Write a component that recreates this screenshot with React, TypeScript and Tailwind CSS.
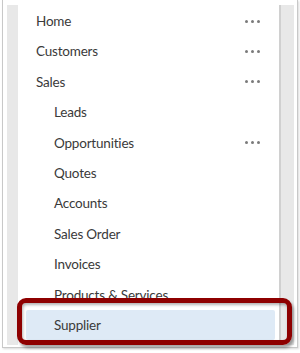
import React from "react";

type Item = {
  label: string;
  level: 0 | 1;
  more?: boolean;
  active?: boolean;
};

const items: Item[] = [
  { label: "Home", level: 0, more: true },
  { label: "Customers", level: 0, more: true },
  { label: "Sales", level: 0, more: true },
  { label: "Leads", level: 1 },
  { label: "Opportunities", level: 1, more: true },
  { label: "Quotes", level: 1 },
  { label: "Accounts", level: 1 },
  { label: "Sales Order", level: 1 },
  { label: "Invoices", level: 1 },
  { label: "Products & Services", level: 1 },
  { label: "Supplier", level: 1, active: true },
];

function Dots() {
  return (
    <span className="flex items-center gap-[3px]">
      <span className="h-[3px] w-[3px] rounded-full bg-[#7a7a7a]" />
      <span className="h-[3px] w-[3px] rounded-full bg-[#7a7a7a]" />
      <span className="h-[3px] w-[3px] rounded-full bg-[#7a7a7a]" />
    </span>
  );
}

export default function App() {
  return (
    <div
      className="relative h-[353px] w-[300px] overflow-hidden bg-white"
      style={{ fontFamily: 'Lato, "Open Sans", sans-serif' }}
    >
      <div className="ml-[2px] h-[348px] w-[296px] border-b border-l border-r border-[#c8c8c8] bg-white shadow-[1px_1px_2px_rgba(0,0,0,0.15)]">
        <div className="flex h-full pl-[4px] pr-[3px] pt-[5px] pb-[2px]">
          <div className="w-[11px] bg-[#e8e8e8]" />
          <ul className="flex-1 pt-[1px] pl-[8px] pr-[4px]">
            {items.map((item) => (
              <li
                key={item.label}
                className={`flex h-[30.4px] items-center justify-between pr-[15px] text-[13.5px] tracking-[-0.2px] text-[#3a3a3a] ${
                  item.active ? "rounded-[2px] bg-[#deeaf6]" : ""
                } ${item.level === 0 ? "pl-[10px]" : "pl-[28px]"}`}
              >
                <span className="whitespace-nowrap">{item.label}</span>
                {item.more && <Dots />}
              </li>
            ))}
          </ul>
          <div className="w-[15px] border-l-2 border-[#d0d0d0] bg-[#e8e8e8]" />
        </div>
      </div>
      <div className="pointer-events-none absolute left-[17px] top-[298px] h-[47px] w-[275px] rounded-[9px] border-[5px] border-[#8e0000] shadow-[2px_3px_3px_rgba(0,0,0,0.35),inset_1px_2px_3px_rgba(0,0,0,0.3)]" />
    </div>
  );
}
